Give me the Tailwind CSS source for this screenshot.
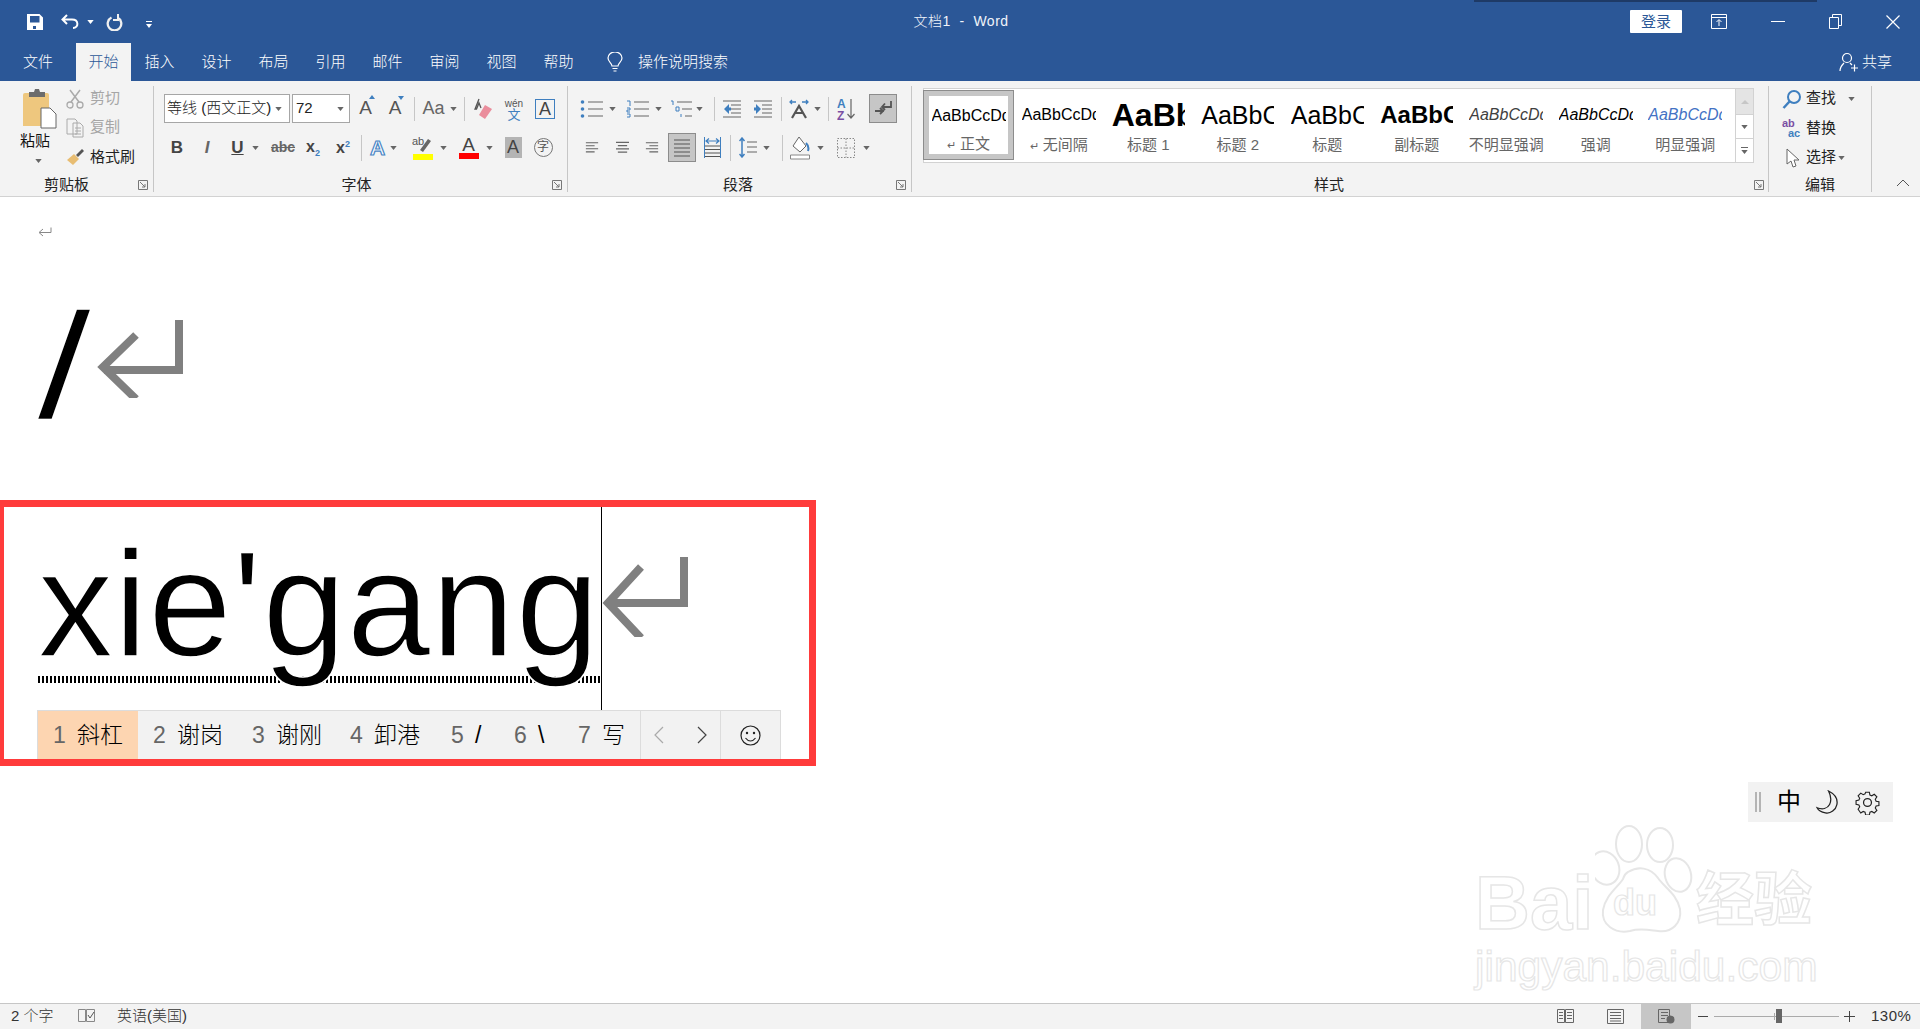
<!DOCTYPE html>
<html lang="zh-CN">
<head>
  <meta charset="UTF-8">
  <title>文档1 - Word</title>
  <script src="https://cdn.jsdelivr.net/npm/@tailwindcss/browser@4"></script>
</head>
<body class="bg-white font-['Liberation_Sans','Noto_Sans_CJK_SC',sans-serif] text-[15px] text-[#262626]">
<svg class="hidden">
  <symbol id="dd" viewBox="0 0 8 5"><path d="M0 0h8L4 5z" fill="#666"/></symbol>
  <symbol id="launch" viewBox="0 0 10 10"><path d="M.5.5h9v9M.5.5v9h9M2 2l5 5M7 4v3H4" fill="none" stroke="#777"/></symbol>
  <symbol id="lines" viewBox="0 0 16 14"><path d="M1 1.5h14M1 5h10M1 8.500h14M1 12h10" stroke="#666" stroke-width="1.200" fill="none"/></symbol>
</svg>
<div class="flex flex-col h-screen overflow-hidden relative">
  <!-- title bar -->
  <div class="relative flex items-center h-[43px] bg-[#2b5797] text-white shrink-0">
    <div class="absolute top-0 left-[1474px] w-[343px] h-[2px] bg-[#1e3a66]"></div>
    <div class="flex items-center pl-[27px] w-[600px]">
      <svg class="w-[16px] h-[16px]" viewBox="0 0 16 16"><path fill-rule="evenodd" d="M0 0h12.500L16 3.500V16H0zM3 2v6.500h9.500V2zM6 12v3h3v-3z" fill="#fff"/></svg>
      <svg class="w-[19px] h-[15px] ml-[18px]" viewBox="0 0 19 15"><path d="M6 1 1.500 5.500 6 10M2 5.500h9c7 0 7 8.500 1 8.500" fill="none" stroke="#fff" stroke-width="2"/></svg>
      <svg class="w-[7px] h-[4px] ml-[7px]" viewBox="0 0 8 5"><path d="M0 0h8L4 5z" fill="#fff"/></svg>
      <svg class="w-[17px] h-[18px] ml-[12px]" viewBox="0 0 17 18"><path d="M5.500 4.500a6.800 6.800 0 1 0 6 0" fill="none" stroke="#f0f0f0" stroke-width="2.300"/><path d="M12 1v6H7" fill="none" stroke="#f0f0f0" stroke-width="2"/></svg>
      <svg class="w-[6px] h-[7px] ml-[23px] mt-[5px]" viewBox="0 0 6 7"><path d="M0 0h6v1H0zM0 3h6L3 7z" fill="#fff"/></svg>
    </div>
    <div class="w-[722px] text-center text-[14px] tracking-[.5px] font-light text-[#f0f4fa]">文档1&nbsp; - &nbsp;Word</div>
    <div class="flex items-center ml-[308px]">
      <div class="w-[52px] h-[23px] bg-white rounded-[1px] text-[#2b5797] text-center leading-[23px] text-[15px]">登录</div>
      <svg class="w-[16px] h-[15px] ml-[29px]" viewBox="0 0 16 15"><path d="M.5.500h15v14H.5zM.5 3.500h15M8 12V6M5.500 8 8 5.500 10.500 8" fill="none" stroke="#fff"/></svg>
      <div class="w-[14px] h-[1.500px] bg-white ml-[44px]"></div>
      <svg class="w-[13px] h-[15px] ml-[44px]" viewBox="0 0 13 15"><path d="M.5 3.500h9v11h-9zM3.500 3.500v-3h9v11h-3" fill="none" stroke="#fff"/></svg>
      <svg class="w-[14px] h-[14px] ml-[44px]" viewBox="0 0 14 14"><path d="m.5.500 13 13M13.500.5l-13 13" stroke="#fff" stroke-width="1.200"/></svg>
    </div>
  </div>
  <!-- tabs -->
  <div class="flex items-end h-[38px] bg-[#2b5797] text-white shrink-0 font-light">
    <div class="w-[60px] ml-[8px] h-full flex items-center justify-center">文件</div>
    <div class="w-[55px] ml-[8px] h-full flex items-center justify-center bg-[#f3f3f3] text-[#2b5797]">开始</div>
    <div class="w-[57px] h-full flex items-center justify-center">插入</div>
    <div class="w-[57px] h-full flex items-center justify-center">设计</div>
    <div class="w-[57px] h-full flex items-center justify-center">布局</div>
    <div class="w-[57px] h-full flex items-center justify-center">引用</div>
    <div class="w-[57px] h-full flex items-center justify-center">邮件</div>
    <div class="w-[57px] h-full flex items-center justify-center">审阅</div>
    <div class="w-[57px] h-full flex items-center justify-center">视图</div>
    <div class="w-[57px] h-full flex items-center justify-center">帮助</div>
    <div class="h-full flex items-center ml-[20px]">
      <svg class="w-[16px] h-[21px]" viewBox="0 0 16 21"><path d="M5 14c0-3-4-4-4-8a7 6 0 0 1 14 0c0 4-4 5-4 8zM5.500 16.500h5M6.500 19h3" fill="none" stroke="#fff" stroke-width="1.200"/></svg>
      <span class="ml-[15px]">操作说明搜索</span>
    </div>
    <div class="h-full flex items-center ml-auto pr-[28px]">
      <svg class="w-[20px] h-[20px]" viewBox="0 0 20 20"><circle cx="8" cy="6" r="4.500" fill="none" stroke="#fff" stroke-width="1.200"/><path d="M1 19c0-4 2-6 4-8M11 11l2 2M12 16h7M15.500 12.500v7" fill="none" stroke="#fff" stroke-width="1.200"/></svg>
      <span class="ml-[3px]">共享</span>
    </div>
  </div>
  <!-- ribbon -->
  <div class="flex items-start h-[116px] bg-[#f3f3f3] border-b border-[#d2d2d2] py-[5px] shrink-0">
    <!-- clipboard -->
    <div class="relative w-[154px] h-[106px] border-r border-[#c6c6c6] flex flex-col shrink-0">
      <div class="flex h-[83px] shrink-0">
        <div class="w-[66px] pl-[21px] pt-[3px] flex flex-col">
          <svg class="w-[36px] h-[40px] shrink-0" viewBox="0 0 36 40">
            <path d="M2 6q0-2 2-2h22q2 0 2 2v31H2z" fill="#eec77e"/><path d="M8 3h5l1-3h4l1 3h5v5H8z" fill="#6c6c6c"/>
            <path d="M20 19h9l6 6v14H20z" fill="#fff" stroke="#666"/>
          </svg>
          <span class="-ml-[1px] mt-[2px] leading-[20px] text-[#111]">粘贴</span>
          <svg class="w-[7px] h-[4px] ml-[14px] mt-[8px] shrink-0"><use href="#dd"/></svg>
        </div>
        <div class="flex flex-col">
          <div class="flex items-center h-[29px] shrink-0 -mt-[2px] text-[#a6a6a6]">
            <svg class="w-[18px] h-[20px]" viewBox="0 0 18 20"><path d="M4 1l9 12M14 1 5 13" stroke="#aaa" stroke-width="1.500" fill="none"/><circle cx="4" cy="16" r="3" fill="none" stroke="#aaa" stroke-width="1.300"/><circle cx="14" cy="16" r="3" fill="none" stroke="#aaa" stroke-width="1.300"/></svg>
            <span class="ml-[6px]">剪切</span>
          </div>
          <div class="flex items-center h-[29px] shrink-0 text-[#a6a6a6]">
            <svg class="w-[18px] h-[20px]" viewBox="0 0 18 20"><path d="M1 1h8l2 2v13H1zM7 5h7l3 3v11H7z" fill="#f3f3f3" stroke="#aaa"/><path d="M9 10h6M9 13h6M9 16h6" stroke="#aaa"/></svg>
            <span class="ml-[6px]">复制</span>
          </div>
          <div class="flex items-center h-[30px] shrink-0 text-[#222]">
            <svg class="w-[18px] h-[18px]" viewBox="0 0 18 18"><path d="M1 12 8 6l5 5-6 6z" fill="#e8bd72"/><path d="m10 7 6-6 2 2-6 6z" fill="#555"/></svg>
            <span class="ml-[6px]">格式刷</span>
          </div>
        </div>
      </div>
      <div class="relative text-center pr-[20px] text-[#222] leading-[20px] mt-[6px] -mb-[3px] shrink-0">剪贴板
        <svg class="absolute right-[5px] top-[5px] w-[10px] h-[10px]"><use href="#launch"/></svg></div>
    </div>
    <!-- font -->
    <div class="w-[414px] h-[106px] border-r border-[#c6c6c6] flex flex-col shrink-0 pt-[8px] text-[#555]">
      <div class="flex items-center h-[29px] shrink-0 pl-[10px]">
        <div class="flex items-center justify-between w-[126px] h-[29px] bg-white border border-[#a6a6a6] pl-[2px] pr-[7px] text-[#222] font-light whitespace-nowrap"><span>等线 (西文正文)</span><svg class="w-[7px] h-[4px]"><use href="#dd"/></svg></div>
        <div class="flex items-center justify-between w-[58px] h-[29px] ml-[2px] bg-white border border-[#a6a6a6] pl-[3px] pr-[5px] text-[#222]"><span>72</span><svg class="w-[7px] h-[4px]"><use href="#dd"/></svg></div>
        <div class="w-[31px] text-center text-[19px] relative">A<i class="absolute left-[19px] top-[1px] w-0 h-0 border-x-[3px] border-x-transparent border-b-[4px] border-b-[#3f7fbf]"></i></div>
        <div class="w-[28px] text-center text-[19px] relative">A<i class="absolute left-[17px] top-[2px] w-0 h-0 border-x-[3px] border-x-transparent border-t-[4px] border-t-[#3f7fbf]"></i></div>
        <div class="w-px h-[24px] bg-[#c6c6c6] ml-[5px]"></div>
        <div class="w-[49px] flex items-center justify-center gap-[5px] text-[18px] text-[#666]"><span>Aa</span><svg class="w-[7px] h-[4px]"><use href="#dd"/></svg></div>
        <div class="w-px h-[24px] bg-[#c6c6c6]"></div>
        <div class="w-[36px] flex justify-center">
          <svg class="w-[20px] h-[22px]" viewBox="0 0 20 22"><path d="M6 1 2 11h1.500L6 5l2 5" fill="none" stroke="#555" stroke-width="1.300"/><path d="m12 7 7 4-7 10-6-4z" fill="#ea8d9c"/></svg>
        </div>
        <div class="w-[26px] flex flex-col items-center leading-[11px] text-[#3f7fbf]"><span class="text-[10px] text-[#555]">wén</span><span class="text-[13px]">文</span></div>
        <div class="ml-[8px] w-[20px] h-[20px] border border-[#3f7fbf] text-center leading-[18px] text-[18px] text-[#444]">A</div>
      </div>
      <div class="flex items-center h-[29px] shrink-0 mt-[10px] pl-[8px]">
        <div class="w-[30px] text-center font-bold text-[17px] text-[#444]">B</div>
        <div class="w-[30px] text-center italic font-bold text-[17px] text-[#666]">I</div>
        <div class="w-[46px] flex items-center justify-center gap-[8px]"><span class="font-bold text-[17px] underline text-[#444]">U</span><svg class="w-[7px] h-[4px]"><use href="#dd"/></svg></div>
        <div class="w-[30px] text-center line-through text-[14px] font-bold text-[#666]">abc</div>
        <div class="w-[30px] text-center font-bold text-[16px] text-[#444]">x<span class="text-[9px] text-[#3f7fbf] align-sub">2</span></div>
        <div class="w-[30px] text-center font-bold text-[16px] text-[#444]">x<span class="text-[9px] text-[#3f7fbf] align-super">2</span></div>
        <div class="w-px h-[26px] bg-[#c6c6c6] ml-[3px]"></div>
        <div class="w-[43px] flex items-center justify-center gap-[5px]"><span class="font-bold text-[21px] text-white [-webkit-text-stroke:1.200px_#4a86c5]">A</span><svg class="w-[7px] h-[4px]"><use href="#dd"/></svg></div>
        <div class="w-[48px] flex items-center justify-center gap-[7px]">
          <svg class="w-[21px] h-[24px]" viewBox="0 0 21 24"><path d="m8 14 8-11 3 2-8 11z" fill="#666"/><path d="M1 18h20v6H1z" fill="#ff0"/><text x="0" y="9" font-size="11" fill="#555" font-family="Liberation Sans">ab</text></svg>
          <svg class="w-[7px] h-[4px]"><use href="#dd"/></svg></div>
        <div class="w-[45px] flex items-center justify-center gap-[7px]">
          <div class="w-[20px] flex flex-col items-center leading-[17px]"><span class="text-[19px] text-[#444]">A</span><i class="w-[20px] h-[6px] bg-[#f00]"></i></div>
          <svg class="w-[7px] h-[4px]"><use href="#dd"/></svg></div>
        <div class="w-[30px] flex justify-center"><div class="w-[17px] h-[21px] bg-[#b4b4b4] text-center text-[#444] text-[18px] leading-[21px]">A</div></div>
        <div class="w-[30px] flex justify-center"><div class="w-[19px] h-[19px] rounded-full border border-[#777] text-center text-[12px] leading-[17px] text-[#555]">字</div></div>
      </div>
      <div class="relative text-center pr-[8px] text-[#222] leading-[20px] mt-[13px] -mb-[3px] shrink-0">字体
        <svg class="absolute right-[5px] top-[5px] w-[10px] h-[10px]"><use href="#launch"/></svg></div>
    </div>
    <!-- paragraph -->
    <div class="w-[344px] h-[106px] border-r border-[#c6c6c6] flex flex-col shrink-0 pt-[8px]">
      <div class="flex items-center h-[29px] shrink-0 pl-[12px]">
        <div class="w-[46px] flex items-center gap-[4px]">
          <svg class="w-[24px] h-[18px] shrink-0" viewBox="0 0 24 18"><path d="M8 2h15M8 9h15M8 16h15" stroke="#666" stroke-width="1.200"/><circle cx="2.500" cy="2" r="1.800" fill="#3f7fbf"/><circle cx="2.500" cy="9" r="1.800" fill="#3f7fbf"/><circle cx="2.500" cy="16" r="1.800" fill="#3f7fbf"/></svg>
          <svg class="w-[7px] h-[4px] ml-[1px]"><use href="#dd"/></svg></div>
        <div class="w-[44px] flex items-center gap-[4px]">
          <svg class="w-[24px] h-[18px] shrink-0" viewBox="0 0 24 18"><path d="M8 2h15M8 9h15M8 16h15" stroke="#666" stroke-width="1.200"/><path d="M1 1h3v5M1 8h3v2H1v2h3M1 14h3v3H1" fill="none" stroke="#3f7fbf"/></svg>
          <svg class="w-[7px] h-[4px] ml-[1px]"><use href="#dd"/></svg></div>
        <div class="w-[40px] flex items-center gap-[2px]">
          <svg class="w-[24px] h-[18px] shrink-0" viewBox="0 0 24 18"><path d="M7 2h15M12 9h10M15 16h7" stroke="#666" stroke-width="1.200"/><path d="M1 1h2v4M6 7h3v4H6zM11 14v3" fill="none" stroke="#3f7fbf"/></svg>
          <svg class="w-[7px] h-[4px]"><use href="#dd"/></svg></div>
        <div class="w-px h-[24px] bg-[#c6c6c6] ml-[4px]"></div>
        <div class="w-[33px] flex justify-center">
          <svg class="w-[18px] h-[18px]" viewBox="0 0 18 18"><path d="M0 1h18M8 5h10M8 9h10M8 13h10M0 17h18" stroke="#666" stroke-width="1.200"/><path d="M6 4 1 9l5 5V10.500h2V7.500H6z" fill="#3f7fbf"/></svg></div>
        <div class="w-[30px] flex justify-center">
          <svg class="w-[18px] h-[18px]" viewBox="0 0 18 18"><path d="M0 1h18M8 5h10M8 9h10M8 13h10M0 17h18" stroke="#666" stroke-width="1.200"/><path d="m2 4 5 5-5 5V10.500H0V7.500h2z" fill="#3f7fbf"/></svg></div>
        <div class="w-px h-[24px] bg-[#c6c6c6] ml-[3px]"></div>
        <div class="w-[46px] flex items-center justify-end gap-[5px] pr-[7px]">
          <svg class="w-[20px] h-[20px]" viewBox="0 0 20 20"><path d="M1 3h6M19 3h-6M3 1 1 3l2 2M17 1l2 2-2 2" fill="none" stroke="#3f7fbf" stroke-width="1.300"/><path d="m3 19 7-12 7 12M6 14h8" fill="none" stroke="#555" stroke-width="2.200"/></svg>
          <svg class="w-[7px] h-[4px]"><use href="#dd"/></svg></div>
        <div class="w-px h-[24px] bg-[#c6c6c6]"></div>
        <div class="w-[36px] flex justify-center">
          <svg class="w-[20px] h-[24px]" viewBox="0 0 20 24"><text x="0" y="11" font-size="12" font-weight="bold" fill="#3f7fbf" font-family="Liberation Sans">A</text><text x="0" y="23" font-size="12" font-weight="bold" fill="#7a4fa3" font-family="Liberation Sans">Z</text><path d="M14 2v19M10.500 17l3.500 4 3.500-4" fill="none" stroke="#666" stroke-width="1.200"/></svg></div>
        <div class="w-[28px] h-[29px] ml-[4px] bg-[#c6c6c6] border border-[#8c8c8c] flex items-center justify-center">
          <svg class="w-[19px] h-[17px]" viewBox="0 0 19 17"><path d="M17 1v6h-9M11 3.500 8 7l3 3M1 11h9M6 8l3 3-3 3" fill="none" stroke="#555" stroke-width="1.800"/></svg></div>
      </div>
      <div class="flex items-center h-[29px] shrink-0 mt-[10px] pl-[12px]">
        <div class="w-[24px] flex justify-center"><svg class="w-[14px] h-[13px]"><use href="#lines"/></svg></div>
        <div class="w-[36px] flex justify-center"><svg class="w-[15px] h-[13px]" viewBox="0 0 16 14"><path d="M1 1.500h14M3 5h10M1 8.500h14M3 12h10" stroke="#666" stroke-width="1.200"/></svg></div>
        <div class="w-[24px] flex justify-center"><svg class="w-[14px] h-[13px]" viewBox="0 0 16 14"><path d="M1 1.500h14M5 5h10M1 8.500h14M5 12h10" stroke="#666" stroke-width="1.200"/></svg></div>
        <div class="w-[28px] h-[29px] ml-[4px] bg-[#c6c6c6] border border-[#8c8c8c] flex items-center justify-center">
          <svg class="w-[16px] h-[18px]" viewBox="0 0 16 18"><path d="M0 1h16M0 5h16M0 9h16M0 13h16M0 17h16" stroke="#555" stroke-width="1.100"/></svg></div>
        <div class="w-[32px] flex justify-center">
          <svg class="w-[17px] h-[21px]" viewBox="0 0 17 21"><path d="M0 9h17M0 12.500h17M0 16h17M0 19.500h17" stroke="#555"/><path d="M.5 0v21M16.500 0v21" stroke="#3f7fbf"/><path d="M2 4h13M5 1.500 2 4l3 2.500M12 1.500 15 4l-3 2.500" fill="none" stroke="#3f7fbf" stroke-width="1.200"/></svg></div>
        <div class="w-px h-[26px] bg-[#c6c6c6] ml-[2px]"></div>
        <div class="w-[46px] flex items-center justify-center gap-[6px]">
          <svg class="w-[18px] h-[21px]" viewBox="0 0 18 21"><path d="M3 1v19M.5 4 3 1l2.500 3M.5 17 3 20l2.500-3" fill="none" stroke="#3f7fbf" stroke-width="1.500"/><path d="M8 4h10M8 9h10M8 14h10" stroke="#666" stroke-width="1.200" transform="translate(0 1)"/></svg>
          <svg class="w-[7px] h-[4px]"><use href="#dd"/></svg></div>
        <div class="w-px h-[26px] bg-[#c6c6c6] ml-[5px]"></div>
        <div class="w-[47px] flex items-center justify-center gap-[7px]">
          <svg class="w-[20px] h-[24px]" viewBox="0 0 20 24"><path d="m9 1 7 9-6 6-7-6z" fill="#fff" stroke="#666"/><path d="M16 7c2 2 3 5 2 8" fill="none" stroke="#3f7fbf" stroke-width="2"/><path d="M.5 19h19v4H.5z" fill="#fff" stroke="#888"/></svg>
          <svg class="w-[7px] h-[4px]"><use href="#dd"/></svg></div>
        <div class="w-[46px] flex items-center justify-center gap-[8px]">
          <svg class="w-[18px] h-[20px]" viewBox="0 0 18 20"><path d="M.5.500h17v19H.5zM9 .5v19M.5 10h17" fill="none" stroke="#888" stroke-dasharray="1.500 1.500"/></svg>
          <svg class="w-[7px] h-[4px]"><use href="#dd"/></svg></div>
      </div>
      <div class="relative text-center pr-[3px] text-[#222] leading-[20px] mt-[13px] -mb-[3px] shrink-0">段落
        <svg class="absolute right-[5px] top-[5px] w-[10px] h-[10px]"><use href="#launch"/></svg></div>
    </div>
    <!-- styles -->
    <div class="w-[857px] h-[106px] border-r border-[#c6c6c6] flex flex-col shrink-0 pt-[2px] pl-[11px] pr-[14px]">
      <div class="flex h-[75px] shrink-0 bg-white border border-[#d2d2d2]">
        <div class="w-[91px] h-[70px] mt-px -ml-px border border-[#8c8c8c] shrink-0"><div class="h-full border-[5px] border-[#c6c6c6] flex flex-col items-center">
          <div class="w-[74px] h-[33px] overflow-hidden whitespace-nowrap text-[16px] text-black leading-[34px] mt-[3px]">AaBbCcDd</div>
          <div class="text-[#666] leading-[18px] mt-[4px] whitespace-nowrap"><span class="text-[11px]">↵</span> 正文</div>
        </div></div>
        <div class="w-[89.500px] flex flex-col items-center pt-[9px] shrink-0">
          <div class="w-[74px] h-[33px] overflow-hidden whitespace-nowrap text-[16px] text-black leading-[34px]">AaBbCcDd</div>
          <div class="text-[#666] leading-[18px] mt-[5px]"><span class="text-[11px]">↵</span> 无间隔</div>
        </div>
        <div class="w-[89.500px] flex flex-col items-center pt-[9px] shrink-0">
          <div class="w-[73px] h-[33px] overflow-hidden whitespace-nowrap text-[32px] font-bold text-black leading-[34px]">AaBbC</div>
          <div class="text-[#666] leading-[18px] mt-[5px]">标题 1</div>
        </div>
        <div class="w-[89.500px] flex flex-col items-center pt-[9px] shrink-0">
          <div class="w-[73px] h-[33px] overflow-hidden whitespace-nowrap text-[25px] text-black leading-[34px]">AaBbCc</div>
          <div class="text-[#666] leading-[18px] mt-[5px]">标题 2</div>
        </div>
        <div class="w-[89.500px] flex flex-col items-center pt-[9px] shrink-0">
          <div class="w-[73px] h-[33px] overflow-hidden whitespace-nowrap text-[25px] text-black leading-[34px]">AaBbCc</div>
          <div class="text-[#666] leading-[18px] mt-[5px]">标题</div>
        </div>
        <div class="w-[89.500px] flex flex-col items-center pt-[9px] shrink-0">
          <div class="w-[73px] h-[33px] overflow-hidden whitespace-nowrap text-[24px] font-bold text-black leading-[34px]">AaBbCc</div>
          <div class="text-[#666] leading-[18px] mt-[5px]">副标题</div>
        </div>
        <div class="w-[89.500px] flex flex-col items-center pt-[9px] shrink-0">
          <div class="w-[74px] h-[33px] overflow-hidden whitespace-nowrap text-[16px] italic text-[#404040] leading-[34px]">AaBbCcDd</div>
          <div class="text-[#666] leading-[18px] mt-[5px]">不明显强调</div>
        </div>
        <div class="w-[89.500px] flex flex-col items-center pt-[9px] shrink-0">
          <div class="w-[74px] h-[33px] overflow-hidden whitespace-nowrap text-[16px] italic text-black leading-[34px]">AaBbCcDd</div>
          <div class="text-[#666] leading-[18px] mt-[5px]">强调</div>
        </div>
        <div class="w-[89.500px] flex flex-col items-center pt-[9px] shrink-0">
          <div class="w-[74px] h-[33px] overflow-hidden whitespace-nowrap text-[16px] italic text-[#4472c4] leading-[34px]">AaBbCcDd</div>
          <div class="text-[#666] leading-[18px] mt-[5px]">明显强调</div>
        </div>
        <div class="ml-auto w-[18px] flex flex-col shrink-0 border-l border-[#d2d2d2]">
          <div class="h-[26px] bg-[#e4e4e4] flex items-center justify-center border-b border-[#d2d2d2]"><i class="w-0 h-0 border-x-[4px] border-x-transparent border-b-[4px] border-b-[#c6c6c6]"></i></div>
          <div class="h-[24px] flex items-center justify-center border-b border-[#d2d2d2]"><svg class="w-[7px] h-[4px]"><use href="#dd"/></svg></div>
          <div class="h-[23px] flex flex-col items-center justify-center gap-[2px]"><i class="w-[7px] h-px bg-[#666]"></i><svg class="w-[7px] h-[4px]"><use href="#dd"/></svg></div>
        </div>
      </div>
      <div class="relative text-center pr-[19px] text-[#222] leading-[20px] mt-[12px] -mb-[3px] shrink-0">样式
        <svg class="absolute -right-[10px] top-[5px] w-[10px] h-[10px]"><use href="#launch"/></svg></div>
    </div>
    <!-- editing -->
    <div class="w-[103px] h-[106px] border-r border-[#c6c6c6] flex flex-col shrink-0 pl-[13px] text-[#222]">
      <div class="flex items-center h-[29px] shrink-0 -mt-[2px]">
        <svg class="w-[20px] h-[20px]" viewBox="0 0 20 20"><circle cx="12" cy="8" r="6" fill="none" stroke="#3f7fbf" stroke-width="2"/><path d="M8 12 1.500 19" stroke="#3f7fbf" stroke-width="2.500"/></svg>
        <span class="ml-[4px]">查找</span><svg class="w-[7px] h-[4px] ml-[12px]"><use href="#dd"/></svg>
      </div>
      <div class="flex items-center h-[30px] shrink-0">
        <div class="w-[20px] flex flex-col text-[11px] font-bold leading-[10px]"><span class="text-[#7a4fa3]">ab</span><span class="text-[#3f7fbf] pl-[6px]">ac</span></div>
        <span class="ml-[4px]">替换</span>
      </div>
      <div class="flex items-center h-[29px] shrink-0">
        <svg class="w-[20px] h-[20px]" viewBox="0 0 20 20"><path d="M5 1v15l4-3 2 6 3-1-2-6h5z" fill="#fff" stroke="#666"/></svg>
        <span class="ml-[4px]">选择</span><svg class="w-[7px] h-[4px] ml-[2px]"><use href="#dd"/></svg>
      </div>
      <div class="text-center pr-[13px] leading-[20px] mt-[3px] -mb-[3px] shrink-0">编辑</div>
    </div>
    <div class="flex-1 h-[106px] flex items-end justify-end pr-[10px] pb-[5px]">
      <svg class="w-[14px] h-[8px]" viewBox="0 0 14 8"><path d="m1 7 6-6 6 6" fill="none" stroke="#555"/></svg>
    </div>
  </div>
  <!-- document -->
  <div class="relative flex-1 bg-white overflow-hidden">
    <div class="h-[303px] pl-[38px] pt-[30px]">
      <svg class="w-[14px] h-[11px]" viewBox="0 0 14 11"><path d="M13 .5v5H1.500M5 2 1 5.500 5 9" fill="none" stroke="#888"/></svg>
      <div class="flex items-start h-[124px] mt-[66px]">
        <span class="text-[150px] leading-[124px] text-black w-[59px] origin-left scale-x-[1.3] inline-block -ml-[1px] [-webkit-text-stroke:1.500px_white]">/</span>
        <svg class="w-[88px] h-[78px] mt-[16px]" viewBox="0 0 88 78"><path d="M83 0v50H8M40 15 7 47l33 32" fill="none" stroke="#808080" stroke-width="8"/></svg>
      </div>
    </div>
    <div class="relative -ml-[3px] w-[819px] h-[266px] border-[7px] border-[#ff3b3b]">
      <div class="absolute left-[597px] top-0 w-px h-[203px] bg-black"></div>
      <div class="flex items-start h-[169px] pl-[34px] pt-[22px]">
        <span class="text-[150px] leading-[150px] text-black w-[563px] tracking-[1px] whitespace-nowrap [-webkit-text-stroke:1.500px_white]">xie'gang</span>
        <svg class="w-[88px] h-[80px] mt-[28px] shrink-0" viewBox="0 0 88 80"><path d="M83 0v46H8M40 10 7 46l33 35" fill="none" stroke="#808080" stroke-width="8"/></svg>
      </div>
      <div class="ml-[34px] w-[562px] h-[7px] bg-[repeating-linear-gradient(90deg,#000_0,#000_2px,transparent_2px,transparent_4px)]"></div>
      <div class="flex items-center ml-[33px] mt-[27px] w-[744px] h-[49px] bg-[#f2f2f2] border-x border-t border-[#dcdcdc] text-[23px] text-black whitespace-nowrap font-light">
        <div class="flex items-center h-full w-[100px] pl-[15px] bg-[#fdd5b1]"><span class="w-[24px] text-[#666]">1</span>斜杠</div>
        <div class="flex items-center h-full w-[99px] pl-[15px]"><span class="w-[24px] text-[#666]">2</span>谢岗</div>
        <div class="flex items-center h-full w-[98px] pl-[15px]"><span class="w-[24px] text-[#666]">3</span>谢刚</div>
        <div class="flex items-center h-full w-[101px] pl-[15px]"><span class="w-[24px] text-[#666]">4</span>卸港</div>
        <div class="flex items-center h-full w-[63px] pl-[15px]"><span class="w-[24px] text-[#666]">5</span>/</div>
        <div class="flex items-center h-full w-[64px] pl-[15px]"><span class="w-[24px] text-[#666]">6</span>\</div>
        <div class="flex items-center h-full w-[77px] pl-[15px]"><span class="w-[24px] text-[#666]">7</span>写</div>
        <div class="flex items-center justify-between h-full w-[81px] pl-[13px] pr-[13px] border-x border-[#dcdcdc]">
          <svg class="w-[10px] h-[18px]" viewBox="0 0 10 18"><path d="M9 1 1 9l8 8" fill="none" stroke="#aaa" stroke-width="1.200"/></svg>
          <svg class="w-[10px] h-[18px]" viewBox="0 0 10 18"><path d="m1 1 8 8-8 8" fill="none" stroke="#444" stroke-width="1.200"/></svg>
        </div>
        <div class="flex-1 flex justify-center">
          <svg class="w-[21px] h-[21px]" viewBox="0 0 21 21"><circle cx="10.500" cy="10.500" r="9.500" fill="none" stroke="#222" stroke-width="1.200"/><circle cx="7" cy="8" r="1.200" fill="#222"/><circle cx="14" cy="8" r="1.200" fill="#222"/><path d="M5.500 13c3 4 7 4 10 0" fill="none" stroke="#222" stroke-width="1.200"/></svg>
        </div>
      </div>
    </div>
    <!-- floating IME toolbar -->
    <div class="absolute left-[1748px] top-[585px] w-[145px] h-[40px] bg-[#f2f2f2] flex items-center">
      <div class="ml-[7px] w-[6px] h-[20px] border-x-2 border-[#b4b4b4]"></div>
      <span class="ml-[16px] text-[24px] leading-none text-black">中</span>
      <svg class="w-[25px] h-[25px] ml-[14px]" viewBox="0 0 24 24"><path d="M13 1c6 3 9 8 8 13s-6 9-11 8-7-3-8-5c5 2 10 1 12-3s1-9-1-13z" fill="none" stroke="#222" stroke-width="1.200"/></svg>
      <svg class="w-[25px] h-[25px] ml-[15px]" viewBox="0 0 24 24"><circle cx="12" cy="12" r="3.800" fill="none" stroke="#222" stroke-width="1.200"/><path d="M10 1h4l.6 3 2 .9 2.600-1.700 2.800 2.800-1.700 2.600.9 2 3 .6v4l-3 .6-.9 2 1.700 2.600-2.800 2.800-2.600-1.700-2 .9-.6 3h-4l-.6-3-2-.9-2.600 1.700L2 19.200l1.700-2.600-.9-2-3-.6v-4l3-.6.9-2L2 4.800 4.800 2l2.600 1.700 2-.9z" fill="none" stroke="#222" stroke-width="1.200" transform="translate(1.200 1.200) scale(.9)"/></svg>
    </div>
    <!-- watermark -->
    <div class="absolute left-[1475px] top-[628px] w-[350px] h-[170px] text-white font-bold">
      <svg class="absolute left-[120px] top-[0px] w-[100px] h-[112px]" viewBox="0 0 100 112" fill="none" stroke="#e6e6e6" stroke-width="2">
        <ellipse cx="34" cy="19" rx="13" ry="18"/><ellipse cx="65" cy="20" rx="13" ry="17"/>
        <ellipse cx="10" cy="43" rx="14" ry="17" transform="rotate(-20 10 43)"/><ellipse cx="83" cy="50" rx="13" ry="17" transform="rotate(-15 83 50)"/>
        <path d="M33 47c10-6 22-5 30 6 6 9 19 16 22 31 2 14-8 24-22 22-9-1-18-3-28 0-15 3-29-6-27-21 2-14 15-23 20-31 1-3 3-6 5-7z"/>
      </svg>
      <span class="absolute left-0 top-[40px] text-[76px] leading-[76px] [-webkit-text-stroke:1.500px_#e6e6e6]">Bai</span>
      <span class="absolute left-[138px] top-[60px] text-[36px] leading-[36px] [-webkit-text-stroke:1.200px_#e6e6e6]">du</span>
      <span class="absolute left-[221px] top-[42px] text-[58px] leading-[66px] [-webkit-text-stroke:1.500px_#e6e6e6]">经验</span>
      <span class="absolute left-0 top-[117px] text-[42.500px] leading-[50px] font-normal whitespace-nowrap [-webkit-text-stroke:1.200px_#e6e6e6]">jingyan.baidu.com</span>
    </div>
  </div>
  <!-- status bar -->
  <div class="flex items-center h-[26px] bg-[#f3f3f3] border-t border-[#c6c6c6] shrink-0 text-[15px] text-[#333] font-light">
    <span class="ml-[11px] w-[67px]">2 个字</span>
    <svg class="w-[17px] h-[15px]" viewBox="0 0 17 15"><path d="M.5.500h7v12h-7zM8.500.5h8v12h-8z" fill="none" stroke="#888"/><path d="m10 6 2 3 4-6" fill="none" stroke="#555"/></svg>
    <span class="ml-[22px]">英语(美国)</span>
    <div class="ml-auto flex items-center h-full">
      <svg class="w-[17px] h-[15px]" viewBox="0 0 17 15"><path d="M.5.500h7v13h-7zM8.500.5h8v13h-8zM2 3.500h4M2 6.500h4M2 9.500h4M10 3.500h5M10 6.500h5M10 9.500h5" fill="none" stroke="#666"/></svg>
      <svg class="w-[17px] h-[15px] ml-[33px]" viewBox="0 0 17 15"><path d="M.5.500h16v14H.5zM3 3.500h11M3 6.500h11M3 9.500h11M3 12h11" fill="none" stroke="#666"/></svg>
      <div class="ml-[17px] w-[50px] h-full bg-[#c6c6c6] flex items-center justify-center">
        <svg class="w-[17px] h-[15px]" viewBox="0 0 17 15"><path d="M.5.500h11v13H.5zM3 3.500h7M3 6.500h7M3 9.500h4" fill="none" stroke="#666"/><circle cx="12.500" cy="10.500" r="4" fill="#666"/></svg>
      </div>
      <div class="ml-[7px] w-[10px] h-px bg-[#444]"></div>
      <div class="relative ml-[6px] w-[125px] h-px bg-[#aaa]">
        <div class="absolute left-[62px] -top-[7px] w-[6px] h-[14px] bg-[#666]"></div>
        <div class="absolute left-[60px] -top-[3px] w-px h-[7px] bg-[#aaa]"></div>
      </div>
      <svg class="w-[11px] h-[11px] ml-[5px]" viewBox="0 0 11 11"><path d="M0 5.500h11M5.500 0v11" stroke="#444"/></svg>
      <span class="w-[40px] ml-[16px] mr-[9px] tracking-[.5px] whitespace-nowrap">130%</span>
    </div>
  </div>
</div>
</body>
</html>
